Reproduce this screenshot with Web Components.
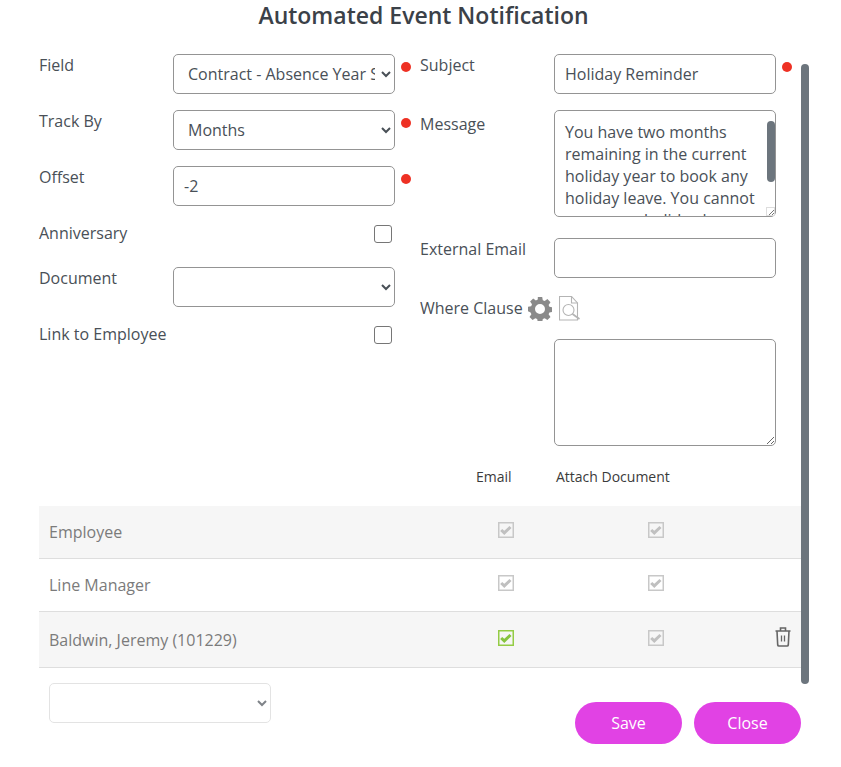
<!DOCTYPE html>
<html>
<head>
<meta charset="utf-8">
<title>Automated Event Notification</title>
<style>
  body { margin: 0; background: #fff; font-family: "Open Sans", sans-serif; color: #343a40; }
</style>
</head>
<body>
<event-dialog>
  <span slot="title">Automated Event Notification</span>
  <div slot="left">
    <form-row label="Field" required>
      <select-box value="Contract - Absence Year Start"></select-box>
    </form-row>
    <form-row label="Track By" required>
      <select-box value="Months"></select-box>
    </form-row>
    <form-row label="Offset" required>
      <text-box value="-2"></text-box>
    </form-row>
    <form-row label="Anniversary" compact>
      <tick-box></tick-box>
    </form-row>
    <form-row label="Document">
      <select-box></select-box>
    </form-row>
    <form-row label="Link to Employee" compact>
      <tick-box></tick-box>
    </form-row>
  </div>
  <div slot="right">
    <form-row label="Subject" required>
      <text-box value="Holiday Reminder"></text-box>
    </form-row>
    <form-row label="Message" low tight>
      <message-box thumb>You have two months remaining in the current holiday year to book any holiday leave. You cannot carry over holiday leave into the next holiday year.</message-box>
    </form-row>
    <form-row label="External Email">
      <text-box></text-box>
    </form-row>
    <where-clause></where-clause>
    <form-row label="" tight>
      <message-box></message-box>
    </form-row>
  </div>
  <recipient-table slot="table">
    <recipient-row name="Employee"></recipient-row>
    <recipient-row name="Line Manager" plain></recipient-row>
    <recipient-row name="Baldwin, Jeremy (101229)" active tall></recipient-row>
  </recipient-table>
  <dialog-footer slot="footer"></dialog-footer>
</event-dialog>

<script>
class EventDialog extends HTMLElement {
  constructor() {
    super();
    this.attachShadow({ mode: 'open' });
    this.shadowRoot.innerHTML = `
      <style>
        :host { display: block; position: relative; width: 841px; min-height: 767px; }
        h2 { margin: 0; padding-left: 6px; height: 54px; box-sizing: border-box; text-align: center;
             font-size: 23px; font-weight: 600; line-height: 30px; color: #3b4148; }
        .body { width: 762px; margin-left: 39px; }
        .form { display: grid; grid-template-columns: 381px 381px; height: 411px; }
        .bar { position: absolute; left: 801px; top: 64px; width: 8px; height: 620px; border-radius: 4px; background: #6c757d; }
      </style>
      <h2><slot name="title"></slot></h2>
      <div class="body">
        <div class="form">
          <slot name="left"></slot>
          <slot name="right"></slot>
        </div>
        <slot name="table"></slot>
        <slot name="footer"></slot>
      </div>
      <div class="bar"></div>
    `;
  }
}

class FormRow extends HTMLElement {
  constructor() {
    super();
    this.attachShadow({ mode: 'open' });
  }
  connectedCallback() {
    const low = this.hasAttribute('low') ? 'low' : '';
    const dot = this.hasAttribute('required') ? '<i></i>' : '';
    this.shadowRoot.innerHTML = `
      <style>
        :host { display: grid; grid-template-columns: 134px 222px 25px; margin-bottom: 16px; }
        :host([tight]) { margin-bottom: 21px; }
        :host([compact]) .ctl { display: flex; justify-content: flex-end; padding: 3px 3px 0 0; height: 26px; }
        label { font-size: 16px; line-height: 24px; margin-top: -1px; color: #495057; white-space: nowrap; }
        label.low { margin-top: 2px; }
        i { display: block; width: 10px; height: 10px; margin: 8px 0 0 6px; border-radius: 50%; background: #ee3124; }
      </style>
      <label class="${low}">${this.getAttribute('label') || ''}</label>
      <div class="ctl"><slot></slot></div>
      ${dot}
    `;
  }
}

class SelectBox extends HTMLElement {
  constructor() {
    super();
    this.attachShadow({ mode: 'open' });
  }
  connectedCallback() {
    const value = this.getAttribute('value') || '';
    this.shadowRoot.innerHTML = `
      <style>
        :host { display: block; }
        select { display: block; width: 100%; height: 40px; box-sizing: border-box; padding: 0 3px 0 10px; background: #fff;
                 border: 1px solid #949494; border-radius: 5px; font: 16px "Open Sans", sans-serif; color: #495057; }
        :host([faint]) select { border-color: #d8d8d8; }
      </style>
      <select><option>${value}</option></select>
    `;
  }
}

class TextBox extends HTMLElement {
  constructor() {
    super();
    this.attachShadow({ mode: 'open' });
  }
  connectedCallback() {
    this.shadowRoot.innerHTML = `
      <style>
        :host { display: block; }
        input { display: block; width: 100%; height: 40px; box-sizing: border-box; padding: 0 10px;
                border: 1px solid #949494; border-radius: 5px; font: 16px "Open Sans", sans-serif; color: #495057; }
      </style>
      <input type="text" value="${this.getAttribute('value') || ''}">
    `;
  }
}

class MessageBox extends HTMLElement {
  constructor() {
    super();
    this.attachShadow({ mode: 'open' });
  }
  connectedCallback() {
    // the inner scrollbar of the message box, with its corner square
    const thumb = this.hasAttribute('thumb') ? `
      <b></b>
      <u><svg width="9" height="9" viewBox="0 0 9 9" fill="none" stroke="#777"><path d="M3 8l5-5M6 8l2-2"/></svg></u>` : '';
    this.shadowRoot.innerHTML = `
      <style>
        :host { display: block; position: relative; height: 107px; }
        textarea { display: block; width: 222px; height: 107px; box-sizing: border-box; padding: 10px 18px 0 10px; margin: 0;
                   border: 1px solid #949494; border-radius: 5px; overflow: hidden; outline: none;
                   font: 16px/22px "Open Sans", sans-serif; color: #495057; }
        b { position: absolute; left: 213px; top: 11px; width: 8px; height: 61px; border-radius: 4px; background: #6c757d; }
        u { position: absolute; left: 212px; top: 97px; width: 9px; height: 9px; background: #fff; outline: 1px solid #ddd; outline-offset: -1px; }
        svg { display: block; }
      </style>
      <textarea>${this.textContent}</textarea>
      ${thumb}
    `;
  }
}

class TickBox extends HTMLElement {
  constructor() {
    super();
    this.attachShadow({ mode: 'open' });
    this.shadowRoot.innerHTML = `
      <style>
        :host { display: block; width: 18px; height: 18px; box-sizing: border-box;
                border: 1px solid #767676; border-radius: 3px; background: #fff; }
      </style>
    `;
  }
}

class WhereClause extends HTMLElement {
  constructor() {
    super();
    this.attachShadow({ mode: 'open' });
    this.shadowRoot.innerHTML = `
      <style>
        :host { display: flex; align-items: center; gap: 6px; height: 29px; margin-bottom: 16px; }
        span { font-size: 16px; line-height: 24px; color: #495057; white-space: nowrap; margin-right: -1px; margin-top: -1px; }
        svg { display: block; flex: none; }
      </style>
      <span>Where Clause</span>
      <svg width="24" height="24" viewBox="0 0 24 24">
        <path fill="#8a8a8a" fill-rule="evenodd" d="M9.800 0h4.400l.6 3.200 1.900.8 2.700-1.900 3.100 3.100-1.900 2.700.8 1.900 3.200.6v4.400l-3.200.6-.8 1.900 1.900 2.700-3.100 3.100-2.700-1.900-1.900.8-.6 3.200H9.800l-.6-3.200-1.900-.8-2.700 1.900-3.100-3.100 1.900-2.700-.8-1.900L0 14.200V9.800l3.200-.6.8-1.900-1.900-2.700 3.100-3.100 2.700 1.900 1.900-.8zM12 7a5 5 0 1 0 0 10 5 5 0 0 0 0-10z"/>
      </svg>
      <svg width="22" height="25" viewBox="0 0 22 25" style="margin-left:1px" fill="none" stroke="#b4b4b4" stroke-width="1.100">
        <path d="M.5.5h12l6 6.500v17H.5z"/>
        <path d="M12.500.5v6.500h6"/>
        <circle cx="9.500" cy="14" r="5.500"/>
        <path stroke-width="1.700" d="M13.500 18l7 5"/>
      </svg>
    `;
  }
}

class RecipientTable extends HTMLElement {
  constructor() {
    super();
    this.attachShadow({ mode: 'open' });
    this.shadowRoot.innerHTML = `
      <style>
        :host { display: block; }
        .head { display: grid; grid-template-columns: 80px auto; height: 41px; padding-left: 437px;
                font-size: 14px; line-height: 24px; color: #3b3b3b; }
      </style>
      <div class="head"><span>Email</span><span>Attach Document</span></div>
      <slot></slot>
    `;
  }
}

class RecipientRow extends HTMLElement {
  constructor() {
    super();
    this.attachShadow({ mode: 'open' });
  }
  tick(color, mark) {
    return `<svg width="16" height="16" viewBox="0 0 16 16">
      <rect x=".75" y=".75" width="14.500" height="14.500" fill="none" stroke="${color}" stroke-width="1.500"/>
      <path d="M3.200 8l3.100 2.900 6.200-5.900" fill="none" stroke="${mark}" stroke-width="3"/>
    </svg>`;
  }
  connectedCallback() {
    const active = this.hasAttribute('active');
    const trash = active ? `
      <svg class="trash" width="16" height="20" viewBox="0 0 16 20" fill="none" stroke="#666" stroke-width="1.600">
        <path d="M.5 4h15M5.500 4V1h5v3M2 4l.7 14a1.200 1.200 0 0 0 1.200 1h8.200a1.200 1.200 0 0 0 1.200-1L14 4"/>
        <path stroke-width="1.300" d="M6.500 8.500v6M9.500 8.500v6"/>
      </svg>` : '';
    this.shadowRoot.innerHTML = `
      <style>
        :host { display: grid; grid-template-columns: 449px 150px 125px 1fr; align-items: center; height: 53px; box-sizing: border-box;
                padding-left: 10px; background: #f6f6f6; border-bottom: 1px solid #dedede; font-size: 16px; color: #7b7b7b; }
        :host([plain]) { background: #fff; }
        :host([tall]) { height: 56px; }
        svg { display: block; margin-top: -4px; }
        svg.trash { margin: -6px 0 0 2px; }
      </style>
      <span>${this.getAttribute('name')}</span>
      ${this.tick(active ? '#94cc45' : '#c8c8c8', active ? '#86c440' : '#c0c0c0')}
      ${this.tick('#c8c8c8', '#c0c0c0')}
      ${trash}
    `;
  }
}

class DialogFooter extends HTMLElement {
  constructor() {
    super();
    this.attachShadow({ mode: 'open' });
    this.shadowRoot.innerHTML = `
      <style>
        :host { display: flex; align-items: flex-start; padding-left: 10px; }
        select-box { width: 222px; margin-top: 15px; opacity: .7; }
        .gap { flex: 1; }
        button { width: 107px; height: 42px; margin: 34px 0 0 12px; border: 0; border-radius: 21px; background: #e142e4;
                 font: 16px "Open Sans", sans-serif; color: #fff; padding: 0; }
      </style>
      <select-box faint></select-box>
      <div class="gap"></div>
      <button>Save</button>
      <button>Close</button>
    `;
  }
}

customElements.define('event-dialog', EventDialog);
customElements.define('form-row', FormRow);
customElements.define('select-box', SelectBox);
customElements.define('text-box', TextBox);
customElements.define('message-box', MessageBox);
customElements.define('tick-box', TickBox);
customElements.define('where-clause', WhereClause);
customElements.define('recipient-table', RecipientTable);
customElements.define('recipient-row', RecipientRow);
customElements.define('dialog-footer', DialogFooter);
</script>
</body>
</html>
